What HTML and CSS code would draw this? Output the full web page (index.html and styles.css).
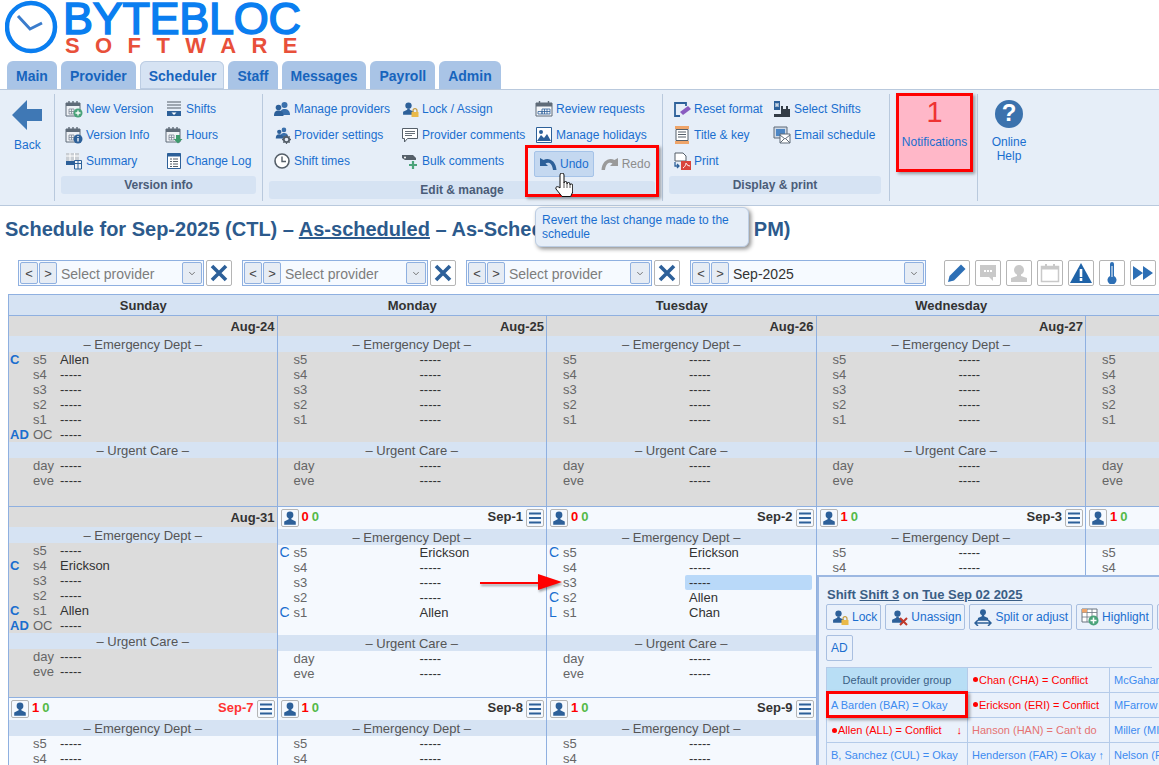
FILE: index.html
```html
<!DOCTYPE html>
<html lang="en">
<head>
    <meta charset="UTF-8">
    <meta name="viewport" content="width=device-width, initial-scale=1.0">
    <title>Schedule for Sep-2025</title>
    <link rel="stylesheet" href="styles.css">
</head>
<body>

    <svg class="defs" width="0" height="0">
        <symbol id="cal" viewBox="0 0 18 18">
            <path d="M1 3h14v13H1z" fill="#eef1f5" stroke="#5f6b78"/><path d="M1 3h14v3H1z" fill="#5f6b78"/>
            <path d="M4 1v3M8 1v3M12 1v3" stroke="#5f6b78" stroke-width="1.4"/>
            <path d="M4 9h5v5H4zM6.500 9v5M4 11.500h5" fill="none" stroke="#7d8894" stroke-width=".8"/>
        </symbol>
        <symbol id="person" viewBox="0 0 18 18">
            <circle cx="9" cy="5.500" r="3.800" fill="#2d6099"/>
            <path d="M7.500 9h3v1.500l5 2.500v3.500h-13V13l5-2.500z" fill="#2d6099"/>
        </symbol>
        <symbol id="people" viewBox="0 0 18 18">
            <circle cx="11.500" cy="5" r="3" fill="#3a70ac"/><path d="M7 15c0-5 2-6 4.500-6s5.500 1 5.500 6z" fill="#3a70ac"/>
            <circle cx="5.500" cy="7.500" r="2.800" fill="#2d6099"/><path d="M1 16c0-4 1.500-5.500 4.500-5.500s5 1.500 5 5.500z" fill="#2d6099"/>
        </symbol>
        <symbol id="gear" viewBox="0 0 10 10">
            <circle cx="5" cy="5" r="3" fill="none" stroke="#555f69" stroke-width="2"/>
            <path d="M5 0v2M5 8v2M0 5h2M8 5h2M1.500 1.500l1.500 1.500M7 7l1.500 1.500M8.500 1.500L7 3M3 7L1.500 8.500" stroke="#555f69" stroke-width="1.400"/>
        </symbol>
        <symbol id="lock" viewBox="0 0 10 10">
            <path d="M3 5V3.200a2 2 0 0 1 4 0V5" fill="none" stroke="#c59a3a" stroke-width="1.200"/>
            <rect x="1.500" y="4.500" width="7" height="5" fill="#e9b949"/>
        </symbol>
    </svg>

    <header class="brand">
        <svg class="clock" width="54" height="54" viewBox="0 0 54 54">
            <circle cx="26" cy="27" r="24" fill="none" stroke="#0a7ef0" stroke-width="4.500"/>
            <path d="M13 16l12 13 12-6" fill="none" stroke="#3a7ccc" stroke-width="3"/>
        </svg>
        <div class="brand-text">
            <div class="brand-top">BYTEBLOC</div>
            <div class="brand-sub">SOFTWARE</div>
        </div>
    </header>

    <nav class="tabs">
        <a class="tab">Main</a>
        <a class="tab">Provider</a>
        <a class="tab active">Scheduler</a>
        <a class="tab">Staff</a>
        <a class="tab">Messages</a>
        <a class="tab">Payroll</a>
        <a class="tab">Admin</a>
    </nav>

    <section class="ribbon">
        <div class="group back-group">
            <svg width="30" height="30" viewBox="0 0 30 30"><path d="M0 15L15 0v9h15v12H15v9z" fill="#3f78b5"/></svg>
            <div class="back-label">Back</div>
        </div>

        <div class="group version-group">
            <div class="items">
                <a class="item"><svg class="ico" viewBox="0 0 18 18"><use href="#cal"/><circle cx="13" cy="13" r="4.500" fill="#4aa37a"/><path d="M13 10.500v5M10.500 13h5" stroke="#fff" stroke-width="1.300"/></svg>New Version</a>
                <a class="item"><svg class="ico" viewBox="0 0 18 18"><path d="M2 2h14M2 5h14M2 8h14" stroke="#555f69"/><path d="M2 11h14v5H2z" fill="#2d6099"/><path d="M6.500 12.500h5L9 15z" fill="#fff"/></svg>Shifts</a>
                <a class="item"><svg class="ico" viewBox="0 0 18 18"><use href="#cal"/><circle cx="13" cy="13" r="4.500" fill="#2d6099"/><path d="M13 12v3.500M13 10v1" stroke="#fff" stroke-width="1.300"/></svg>Version Info</a>
                <a class="item"><svg class="ico" viewBox="0 0 18 18"><use href="#cal"/><path d="M11 9h4v4h2.500L13 17.500 8.500 13H11z" fill="#3e9a6c"/></svg>Hours</a>
                <a class="item"><svg class="ico" viewBox="0 0 18 18"><path d="M1 1h13v10H1z" fill="#c9ced4"/><path d="M1 4h13M5 1v10M9.500 1v10" stroke="#fff"/><path d="M1 9h8v4H1z" fill="#2d6099"/><path d="M9.500 8.500h7v8.500h-7z" fill="#f2f5f8" stroke="#2d6099"/><path d="M10 11.500h6M13 9v8" stroke="#2d6099"/></svg>Summary</a>
                <a class="item"><svg class="ico" viewBox="0 0 18 18"><path d="M2.500 1.500h13v15h-13z" fill="#fff" stroke="#2d6099"/><path d="M2.500 1.500h13v3h-13z" fill="#2d6099"/><path d="M5 7h2M8 7h5M5 9.500h2M8 9.500h5M5 12h2M8 12h5M5 14.500h2M8 14.500h5" stroke="#555f69"/></svg>Change Log</a>
            </div>
            <div class="group-label">Version info</div>
        </div>

        <div class="group edit-group">
            <div class="items">
                <a class="item"><svg class="ico" viewBox="0 0 18 18"><use href="#people"/></svg>Manage providers</a>
                <a class="item"><svg class="ico" viewBox="0 0 18 18"><use href="#person" width="15" height="17"/><use href="#lock" x="9" y="7" width="10" height="11"/></svg>Lock / Assign</a>
                <a class="item"><svg class="ico" viewBox="0 0 18 18"><path d="M1 3h16v13H1z" fill="#f4f6f9" stroke="#5f6b78"/><path d="M1 3h16v3.500H1z" fill="#5f6b78"/><path d="M4.500 1v3M13.500 1v3" stroke="#5f6b78" stroke-width="1.400"/><path d="M7 9h8v5H7zM9.500 9v5M12 9v5M7 11.500h8M3 11.500h4v2.500H3z" fill="none" stroke="#2d6099" stroke-width=".8"/></svg>Review requests</a>
                <a class="item"><svg class="ico" viewBox="0 0 18 18"><use href="#people" width="14" height="14" x="2"/><use href="#gear" x="9" y="9" width="9" height="9"/></svg>Provider settings</a>
                <a class="item"><svg class="ico" viewBox="0 0 18 18"><path d="M1.500 2.500h15v10h-10l-3 3.500v-3.500h-2z" fill="#fff" stroke="#555f69"/><path d="M4 5.500h10M4 7.500h10M4 9.500h7" stroke="#555f69" stroke-width=".9"/></svg>Provider comments</a>
                <a class="item"><svg class="ico" viewBox="0 0 18 18"><path d="M1.500 1.500h15v15h-15z" fill="#fff" stroke="#2d6099"/><path d="M2 15l4-6 3 3 3-4 4 7z" fill="#2d6099"/><circle cx="6" cy="6" r="2" fill="#2d6099"/></svg>Manage holidays</a>
                <a class="item"><svg class="ico" viewBox="0 0 18 18"><circle cx="9" cy="9" r="7" fill="#fff" stroke="#555f69" stroke-width="1.600"/><path d="M9 4.500V9.500h4" fill="none" stroke="#555f69" stroke-width="1.400"/></svg>Shift times</a>
                <a class="item"><svg class="ico" viewBox="0 0 18 18"><path d="M1 3h11l3 3v2H4L1 6z" fill="#555f69"/><circle cx="4" cy="5.500" r="1" fill="#fff"/><path d="M12 9v8M8 13h8" stroke="#4aa37a" stroke-width="2.200"/></svg>Bulk comments</a>
                <div class="history">
                    <a class="hist-btn on"><svg width="18" height="14" viewBox="0 0 18 14"><path d="M1 1v8h8L6.500 6.500C9 5 13 5.500 14 13h3.500C17 4 10 0 4.500 3z" fill="#2d6099"/></svg>Undo</a>
                    <a class="hist-btn off"><svg width="18" height="14" viewBox="0 0 18 14"><path d="M17 1v8H9l2.500-2.500C9 5 5 5.500 4 13H.5C1 4 8 0 13.500 3z" fill="#9a9a9a"/></svg>Redo</a>
                </div>
            </div>
            <div class="group-label">Edit &amp; manage</div>
        </div>

        <div class="group display-group">
            <div class="items">
                <a class="item"><svg class="ico" viewBox="0 0 18 18"><path d="M2 7V3h11v3M2 7v9h5" fill="none" stroke="#2d6099" stroke-width="1.800"/><path d="M7 12l8-6 3 3-8 6z" fill="#8a5cc0"/></svg>Reset format</a>
                <a class="item"><svg class="ico" viewBox="0 0 18 18"><path d="M1 1h6v9H1z" fill="#2d6099"/><path d="M3 3v4M5 3v4M3 5h2" stroke="#fff"/><path d="M8 6h2v3h3V6h2v3h2v8H1v-3h7z" fill="#333c46"/></svg>Select Shifts</a>
                <a class="item"><svg class="ico" viewBox="0 0 18 18"><path d="M2 0h14v3H2zM2 15h14v3H2z" fill="#efa56a"/><path d="M3 3.500h12v11H3z" fill="#fff" stroke="#555f69"/><path d="M5 6h8M5 8.500h8M5 11h8" stroke="#555f69"/></svg>Title &amp; key</a>
                <a class="item"><svg class="ico" viewBox="0 0 18 18"><path d="M1 1h13v11H1z" fill="#cfd9e6" stroke="#5f6b78"/><path d="M3 3h9v7H3z" fill="#4d86c4"/><path d="M7 8h10v9H7z" fill="#fff" stroke="#5f6b78"/><path d="M7 9l5 4 5-4M7 17l4-4M17 17l-4-4" fill="none" stroke="#5f6b78"/></svg>Email schedule</a>
                <a class="item"><svg class="ico" viewBox="0 0 18 18"><path d="M2 1h8l3 3v5H2z" fill="#fff" stroke="#555f69"/><path d="M2 10v4h4M4 12l2 2-2 2" fill="none" stroke="#2d6099" stroke-width="1.300"/><path d="M8 9h10v9H8z" fill="#d9443a"/><path d="M10 16c3-2 3-5 3-5s1 3 4 3" fill="none" stroke="#fff"/></svg>Print</a>
            </div>
            <div class="group-label">Display &amp; print</div>
        </div>

        <div class="group notif-group">
            <a class="notif"><span class="notif-count">1</span><span>Notifications</span></a>
        </div>

        <div class="help-group">
            <svg width="28" height="28" viewBox="0 0 28 28"><circle cx="14" cy="14" r="14" fill="#3b72ad"/><text class="help-mark" x="14" y="21" text-anchor="middle">?</text></svg>
            <div class="help-label">Online<br>Help</div>
        </div>
    </section>

    <h1 class="page-title">Schedule for Sep-2025 (CTL) – <u>As-scheduled</u> – As-Scheduled (09/02/2025, 3:15 PM)</h1>

    <div class="filters">
        <div class="picker"><button class="step">&lt;</button><button class="step">&gt;</button><span class="picker-text">Select provider</span><svg class="drop" viewBox="0 0 20 22"><path d="M7 10l3 3 3-3" fill="none" stroke="#666"/></svg></div>
        <button class="clear"><svg width="18" height="18" viewBox="0 0 18 18"><path d="M2 2l14 14M16 2L2 16" stroke="#2d6099" stroke-width="3.600"/></svg></button>
        <div class="picker"><button class="step">&lt;</button><button class="step">&gt;</button><span class="picker-text">Select provider</span><svg class="drop" viewBox="0 0 20 22"><path d="M7 10l3 3 3-3" fill="none" stroke="#666"/></svg></div>
        <button class="clear"><svg width="18" height="18" viewBox="0 0 18 18"><path d="M2 2l14 14M16 2L2 16" stroke="#2d6099" stroke-width="3.600"/></svg></button>
        <div class="picker"><button class="step">&lt;</button><button class="step">&gt;</button><span class="picker-text">Select provider</span><svg class="drop" viewBox="0 0 20 22"><path d="M7 10l3 3 3-3" fill="none" stroke="#666"/></svg></div>
        <button class="clear"><svg width="18" height="18" viewBox="0 0 18 18"><path d="M2 2l14 14M16 2L2 16" stroke="#2d6099" stroke-width="3.600"/></svg></button>
        <div class="picker month"><button class="step">&lt;</button><button class="step">&gt;</button><span class="picker-text dark">Sep-2025</span><svg class="drop" viewBox="0 0 20 22"><path d="M7 10l3 3 3-3" fill="none" stroke="#666"/></svg></div>

        <div class="tools">
            <button class="clear"><svg width="20" height="20" viewBox="0 0 20 20"><path d="M1 19l1.500-6L14 1.500l4.500 4.500L7 17.500z" fill="#2d6fb5"/></svg></button>
            <button class="clear"><svg width="20" height="20" viewBox="0 0 20 20"><path d="M2 2h16v12h-3v4l-4-4H2z" fill="#c9c9c9"/><path d="M6 8h2M9 8h2M12 8h2" stroke="#fff" stroke-width="2"/></svg></button>
            <button class="clear"><svg width="20" height="20" viewBox="0 0 20 20"><circle cx="10" cy="7" r="5" fill="#c9c9c9"/><path d="M8 11h4v2l6 2v4H2v-4l6-2z" fill="#c9c9c9"/></svg></button>
            <button class="clear"><svg width="20" height="20" viewBox="0 0 20 20"><path d="M1.500 3.500h17v15h-17z" fill="#fff" stroke="#c9c9c9" stroke-width="1.500"/><path d="M1.500 3.500h17v3h-17zM5 1h2v4H5zM13 1h2v4h-2z" fill="#c9c9c9"/></svg></button>
            <button class="clear"><svg width="22" height="20" viewBox="0 0 22 20"><path d="M11 0l11 20H0z" fill="#1f63a8"/><path d="M11 6v8M11 15v3" stroke="#fff" stroke-width="2.600"/></svg></button>
            <button class="clear"><svg width="14" height="22" viewBox="0 0 14 22"><path d="M5 2a2 2 0 0 1 4 0v12a4.500 4.500 0 1 1-4 0z" fill="#2d6fb5"/><path d="M7 4v11" stroke="#fff"/></svg></button>
            <button class="clear"><svg width="20" height="16" viewBox="0 0 20 16"><path d="M0 1l10 7L0 15zM10 1l10 7-10 7z" fill="#2d6fb5"/></svg></button>
        </div>
    </div>

    <section class="calendar">
        <div class="dow">Sunday</div>
        <div class="dow">Monday</div>
        <div class="dow">Tuesday</div>
        <div class="dow">Wednesday</div>
        <div class="dow"></div>

        <!-- week of Aug-24 -->
        <div class="day off first">
            <div class="day-head plain"><span class="date">Aug-24</span></div>
            <div class="dept">– Emergency Dept –</div>
            <div class="slot"><b>C</b><i>s5</i><span>Allen</span></div>
            <div class="slot"><b></b><i>s4</i><span>-----</span></div>
            <div class="slot"><b></b><i>s3</i><span>-----</span></div>
            <div class="slot"><b></b><i>s2</i><span>-----</span></div>
            <div class="slot"><b></b><i>s1</i><span>-----</span></div>
            <div class="slot"><b>AD</b><i>OC</i><span>-----</span></div>
            <div class="dept">– Urgent Care –</div>
            <div class="slot"><b></b><i>day</i><span>-----</span></div>
            <div class="slot"><b></b><i>eve</i><span>-----</span></div>
        </div>
        <div class="day off">
            <div class="day-head plain"><span class="date">Aug-25</span></div>
            <div class="dept">– Emergency Dept –</div>
            <div class="slot"><b></b><i>s5</i><span>-----</span></div>
            <div class="slot"><b></b><i>s4</i><span>-----</span></div>
            <div class="slot"><b></b><i>s3</i><span>-----</span></div>
            <div class="slot"><b></b><i>s2</i><span>-----</span></div>
            <div class="slot"><b></b><i>s1</i><span>-----</span></div>
            <div class="slot"></div>
            <div class="dept">– Urgent Care –</div>
            <div class="slot"><b></b><i>day</i><span>-----</span></div>
            <div class="slot"><b></b><i>eve</i><span>-----</span></div>
        </div>
        <div class="day off">
            <div class="day-head plain"><span class="date">Aug-26</span></div>
            <div class="dept">– Emergency Dept –</div>
            <div class="slot"><b></b><i>s5</i><span>-----</span></div>
            <div class="slot"><b></b><i>s4</i><span>-----</span></div>
            <div class="slot"><b></b><i>s3</i><span>-----</span></div>
            <div class="slot"><b></b><i>s2</i><span>-----</span></div>
            <div class="slot"><b></b><i>s1</i><span>-----</span></div>
            <div class="slot"></div>
            <div class="dept">– Urgent Care –</div>
            <div class="slot"><b></b><i>day</i><span>-----</span></div>
            <div class="slot"><b></b><i>eve</i><span>-----</span></div>
        </div>
        <div class="day off">
            <div class="day-head plain"><span class="date">Aug-27</span></div>
            <div class="dept">– Emergency Dept –</div>
            <div class="slot"><b></b><i>s5</i><span>-----</span></div>
            <div class="slot"><b></b><i>s4</i><span>-----</span></div>
            <div class="slot"><b></b><i>s3</i><span>-----</span></div>
            <div class="slot"><b></b><i>s2</i><span>-----</span></div>
            <div class="slot"><b></b><i>s1</i><span>-----</span></div>
            <div class="slot"></div>
            <div class="dept">– Urgent Care –</div>
            <div class="slot"><b></b><i>day</i><span>-----</span></div>
            <div class="slot"><b></b><i>eve</i><span>-----</span></div>
        </div>
        <div class="day off">
            <div class="day-head plain"></div>
            <div class="dept"></div>
            <div class="slot"><b></b><i>s5</i></div>
            <div class="slot"><b></b><i>s4</i></div>
            <div class="slot"><b></b><i>s3</i></div>
            <div class="slot"><b></b><i>s2</i></div>
            <div class="slot"><b></b><i>s1</i></div>
            <div class="slot"></div>
            <div class="dept"></div>
            <div class="slot"><b></b><i>day</i></div>
            <div class="slot"><b></b><i>eve</i></div>
        </div>

        <!-- week of Aug-31 -->
        <div class="day off first">
            <div class="day-head plain"><span class="date">Aug-31</span></div>
            <div class="dept">– Emergency Dept –</div>
            <div class="slot"><b></b><i>s5</i><span>-----</span></div>
            <div class="slot"><b>C</b><i>s4</i><span>Erickson</span></div>
            <div class="slot"><b></b><i>s3</i><span>-----</span></div>
            <div class="slot"><b></b><i>s2</i><span>-----</span></div>
            <div class="slot"><b>C</b><i>s1</i><span>Allen</span></div>
            <div class="slot"><b>AD</b><i>OC</i><span>-----</span></div>
            <div class="dept">– Urgent Care –</div>
            <div class="slot"><b></b><i>day</i><span>-----</span></div>
            <div class="slot"><b></b><i>eve</i><span>-----</span></div>
        </div>
        <div class="day">
            <div class="day-head"><button class="mini"><svg width="16" height="16"><use href="#person"/></svg></button><em class="red">0</em><em class="green">0</em><span class="date">Sep-1</span><button class="mini"><svg width="14" height="14" viewBox="0 0 14 14"><path d="M1 2.500h12M1 7h12M1 11.500h12" stroke="#2d6099" stroke-width="2"/></svg></button></div>
            <div class="dept">– Emergency Dept –</div>
            <div class="slot"><b>C</b><i>s5</i><span>Erickson</span></div>
            <div class="slot"><b></b><i>s4</i><span>-----</span></div>
            <div class="slot"><b></b><i>s3</i><span>-----</span></div>
            <div class="slot"><b></b><i>s2</i><span>-----</span></div>
            <div class="slot"><b>C</b><i>s1</i><span>Allen</span></div>
            <div class="slot"></div>
            <div class="dept">– Urgent Care –</div>
            <div class="slot"><b></b><i>day</i><span>-----</span></div>
            <div class="slot"><b></b><i>eve</i><span>-----</span></div>
        </div>
        <div class="day">
            <div class="day-head"><button class="mini"><svg width="16" height="16"><use href="#person"/></svg></button><em class="red">0</em><em class="green">0</em><span class="date">Sep-2</span><button class="mini"><svg width="14" height="14" viewBox="0 0 14 14"><path d="M1 2.500h12M1 7h12M1 11.500h12" stroke="#2d6099" stroke-width="2"/></svg></button></div>
            <div class="dept">– Emergency Dept –</div>
            <div class="slot"><b>C</b><i>s5</i><span>Erickson</span></div>
            <div class="slot"><b></b><i>s4</i><span>-----</span></div>
            <div class="slot picked"><b></b><i>s3</i><span>-----</span></div>
            <div class="slot"><b>C</b><i>s2</i><span>Allen</span></div>
            <div class="slot"><b>L</b><i>s1</i><span>Chan</span></div>
            <div class="slot"></div>
            <div class="dept">– Urgent Care –</div>
            <div class="slot"><b></b><i>day</i><span>-----</span></div>
            <div class="slot"><b></b><i>eve</i><span>-----</span></div>
        </div>
        <div class="day">
            <div class="day-head"><button class="mini"><svg width="16" height="16"><use href="#person"/></svg></button><em class="red">1</em><em class="green">0</em><span class="date">Sep-3</span><button class="mini"><svg width="14" height="14" viewBox="0 0 14 14"><path d="M1 2.500h12M1 7h12M1 11.500h12" stroke="#2d6099" stroke-width="2"/></svg></button></div>
            <div class="dept">– Emergency Dept –</div>
            <div class="slot"><b></b><i>s5</i><span>-----</span></div>
            <div class="slot"><b></b><i>s4</i><span>-----</span></div>
        </div>
        <div class="day">
            <div class="day-head"><button class="mini"><svg width="16" height="16"><use href="#person"/></svg></button><em class="red">1</em><em class="green">0</em></div>
            <div class="dept"></div>
            <div class="slot"><b></b><i>s5</i></div>
            <div class="slot"><b></b><i>s4</i></div>
        </div>

        <!-- week of Sep-7 -->
        <div class="day first">
            <div class="day-head"><button class="mini"><svg width="16" height="16"><use href="#person"/></svg></button><em class="red">1</em><em class="green">0</em><span class="date sunday">Sep-7</span><button class="mini"><svg width="14" height="14" viewBox="0 0 14 14"><path d="M1 2.500h12M1 7h12M1 11.500h12" stroke="#2d6099" stroke-width="2"/></svg></button></div>
            <div class="dept">– Emergency Dept –</div>
            <div class="slot"><b></b><i>s5</i><span>-----</span></div>
            <div class="slot"><b></b><i>s4</i><span>-----</span></div>
        </div>
        <div class="day">
            <div class="day-head"><button class="mini"><svg width="16" height="16"><use href="#person"/></svg></button><em class="red">1</em><em class="green">0</em><span class="date">Sep-8</span><button class="mini"><svg width="14" height="14" viewBox="0 0 14 14"><path d="M1 2.500h12M1 7h12M1 11.500h12" stroke="#2d6099" stroke-width="2"/></svg></button></div>
            <div class="dept">– Emergency Dept –</div>
            <div class="slot"><b></b><i>s5</i><span>-----</span></div>
            <div class="slot"><b></b><i>s4</i><span>-----</span></div>
        </div>
        <div class="day">
            <div class="day-head"><button class="mini"><svg width="16" height="16"><use href="#person"/></svg></button><em class="red">1</em><em class="green">0</em><span class="date">Sep-9</span><button class="mini"><svg width="14" height="14" viewBox="0 0 14 14"><path d="M1 2.500h12M1 7h12M1 11.500h12" stroke="#2d6099" stroke-width="2"/></svg></button></div>
            <div class="dept">– Emergency Dept –</div>
            <div class="slot"><b></b><i>s5</i><span>-----</span></div>
            <div class="slot"><b></b><i>s4</i><span>-----</span></div>
        </div>
    </section>

    <!-- things lying over the page -->
    <div class="tooltip">Revert the last change made to the schedule</div>
    <div class="callout callout-undo"></div>

    <svg class="hand" width="18" height="24" viewBox="0 0 18 24"><path d="M5 2a2 2 0 0 1 4 0v8a1.500 1.500 0 0 1 3 0v1a1.500 1.500 0 0 1 3 0v1a1.400 1.400 0 0 1 2.700 0v7l-2 4.500H7L1 16c-1-2 1.500-3.500 4-1z" fill="#fff" stroke="#111"/><path d="M9 10v5M12 11v4M15 12v3" stroke="#111" stroke-width=".7"/></svg>

    <svg class="arrow" width="84" height="20" viewBox="0 0 84 20"><path d="M0 9h58v-8l24 8-24 8V11H0z" fill="#f00"/></svg>

    <aside class="shift-panel">
        <div class="panel-title">Shift <u>Shift 3</u> on <u>Tue Sep 02 2025</u></div>
        <div class="panel-actions">
            <button class="act"><svg class="ico" viewBox="0 0 18 18"><use href="#person" width="15" height="17"/><use href="#lock" x="9" y="7" width="10" height="11"/></svg>Lock</button>
            <button class="act"><svg class="ico" viewBox="0 0 18 18"><use href="#person" width="15" height="17"/><path d="M10 10l7 7M17 10l-7 7" stroke="#c0392b" stroke-width="2"/></svg>Unassign</button>
            <button class="act"><svg class="ico" viewBox="0 0 18 18"><use href="#person" width="14" height="14" x="2"/><path d="M1 15h16M4 12l-3 3 3 3M14 12l3 3-3 3" fill="none" stroke="#2d6099" stroke-width="1.500"/></svg>Split or adjust</button>
            <button class="act"><svg class="ico" viewBox="0 0 18 18"><path d="M1 1h15v13H1z" fill="#fff" stroke="#6b7580"/><path d="M1 4.500h15M1 9h15M6 1v13M11 1v13" stroke="#6b7580" stroke-width=".8"/><path d="M1 1h5v3.500H1z" fill="#efa56a"/><circle cx="12.500" cy="12.500" r="5" fill="#4aa37a"/><path d="M12.500 9.500v6M9.500 12.500h6" stroke="#fff" stroke-width="1.500"/></svg>Highlight</button>
            <button class="act spare"></button>
        </div>
        <button class="act ad">AD</button>
        <div class="panel-table">
            <div class="cell head">Default provider group</div>
            <div class="cell conflict"><span class="dot"></span>Chan (CHA) = Conflict</div>
            <div class="cell">McGahan</div>
            <div class="cell">A Barden (BAR) = Okay</div>
            <div class="cell conflict"><span class="dot"></span>Erickson (ERI) = Conflict</div>
            <div class="cell">MFarrow</div>
            <div class="cell conflict split"><span><span class="dot"></span>Allen (ALL) = Conflict</span><span class="mark">↓</span></div>
            <div class="cell cant">Hanson (HAN) = Can't do</div>
            <div class="cell">Miller (MI</div>
            <div class="cell">B, Sanchez (CUL) = Okay</div>
            <div class="cell split"><span>Henderson (FAR) = Okay</span><span class="mark">↑</span></div>
            <div class="cell">Nelson (F</div>
        </div>
        <div class="callout callout-barden"></div>
    </aside>

</body>
</html>
```

FILE: styles.css
```css
html, body{
    margin: 0;
    height: 765px;
    overflow: hidden;
    background-color: white;
}

body{
    position: relative;
    font-family: "Liberation Sans", Arial, sans-serif;
    font-size: 12px;
    color: #333;
}

.defs{
    position: absolute;
}

.ico{
    width: 18px;
    height: 18px;
    flex: none;
}

/* logo */
.brand{
    display: flex;
    height: 61px;
    padding-left: 5px;
    box-sizing: border-box;
}

.clock{
    margin-right: 4px;
}

.brand-top{
    font-size: 45px;
    line-height: 36px;
    letter-spacing: -0.3px;
    color: #0a7ef0;
    -webkit-text-stroke: 1.6px #0a7ef0;
    margin-top: 1px;
}

.brand-sub{
    font-size: 22px;
    line-height: 18px;
    font-weight: bold;
    letter-spacing: 15.4px;
    color: #e8503a;
    margin-left: 2px;
}

/* tabs */
.tabs{
    display: flex;
    gap: 4px;
    height: 28px;
    padding-left: 7px;
}

.tab{
    display: flex;
    align-items: center;
    padding: 2px 9px 0;
    background-color: #a9c4e6;
    border-radius: 6px 6px 0 0;
    font-size: 14px;
    font-weight: bold;
    color: #1764bd;
}

.tab.active{
    background-color: #d6e3f3;
    box-shadow: inset 0 0 0 1px #bccde3;
    padding: 2px 8px 0 9px;
}

/* ribbon */
.ribbon{
    display: flex;
    height: 115px;
    background-color: #e6eef8;
    border-top: 1px solid #b9c9dd;
    border-bottom: 1px solid #b9c9dd;
}

.group{
    box-sizing: border-box;
    height: 107px;
    margin-top: 4px;
    border-right: 1px solid #b9c9dd;
}

.back-group{
    width: 55px;
    padding: 6px 0 0 12px;
}

.back-label{
    margin: 5px 0 0 2px;
    color: #1a6ecf;
}

.item{
    display: flex;
    align-items: center;
    gap: 3px;
    height: 26px;
    color: #1a6ecf;
    white-space: nowrap;
}

.items{
    display: grid;
    grid-auto-rows: 26px;
    padding-top: 2px;
}

.group-label{
    height: 18px;
    line-height: 18px;
    text-align: center;
    font-weight: bold;
    background-color: #d6e3f3;
    border-radius: 3px;
    color: #4a5c78;
}

.version-group{
    width: 208px;
    padding: 0 6px;
}

.version-group .items{
    grid-template-columns: 100px 100px;
    padding-left: 4px;
}

.version-group .group-label{
    margin-top: 2px;
}

.edit-group{
    width: 400px;
    padding: 0 7px 0 6px;
}

.edit-group .items{
    grid-template-columns: 128px 134px 1fr;
    padding-left: 4px;
}

.edit-group .group-label{
    margin-top: 7px;
}

.display-group{
    width: 227px;
    padding: 0 8px 0 6px;
}

.display-group .items{
    grid-template-columns: 100px 1fr;
    padding-left: 4px;
}

.display-group .group-label{
    margin-top: 2px;
}

.history{
    display: flex;
    gap: 0;
    margin: 3px 0 -3px -1px;
}

.hist-btn{
    display: flex;
    align-items: center;
    gap: 3px;
    height: 24px;
    padding: 0 4px;
    border: 1px solid transparent;
    border-radius: 2px;
}

.hist-btn.on{
    background-color: #c4d8f0;
    border-color: #a5c3e8;
    color: #1a6ecf;
    margin-right: 2px;
}

.hist-btn.off{
    color: #8c8c8c;
}

.notif-group{
    width: 88px;
    padding-left: 6px;
}

.notif{
    box-sizing: border-box;
    display: flex;
    flex-direction: column;
    align-items: center;
    width: 77px;
    height: 79px;
    margin-top: -1px;
    background-color: #ffb7c8;
    border: 3px solid #f00;
    box-shadow: 2px 2px 3px rgba(0, 0, 0, 0.35);
    color: #1a6ecf;
}

.notif-count{
    font-size: 29px;
    line-height: 32px;
    margin: 0 0 7px;
    color: #e33;
}

.help-group{
    width: 62px;
    padding-top: 10px;
    text-align: center;
    color: #1a6ecf;
}

.help-mark{
    font-size: 24px;
    font-weight: bold;
    fill: white;
}

.help-label{
    margin-top: 4px;
    line-height: 14px;
}

/* title */
.page-title{
    margin: 11px 0 0 5px;
    height: 24px;
    line-height: 24px;
    font-size: 20px;
    font-weight: bold;
    color: #2c5a8c;
    white-space: nowrap;
}

/* filters */
.filters{
    display: flex;
    align-items: center;
    gap: 2px;
    height: 26px;
    margin: 19px 0 0 18px;
    width: 1141px;
}

.picker{
    box-sizing: border-box;
    display: flex;
    align-items: center;
    gap: 1px;
    width: 186px;
    height: 26px;
    padding: 0 1px;
    background-color: #f6faff;
    border: 1px solid #8fb0e0;
}

.picker.month{
    width: 236px;
    margin-left: 8px;
}

.clear + .picker{
    margin-left: 8px;
}

.step{
    width: 18px;
    height: 22px;
    padding: 0;
    background-color: #e6ecf4;
    border: 1px solid #8fb0e0;
    border-radius: 2px;
    font-family: inherit;
    font-size: 13px;
    color: #444;
}

.picker-text{
    flex: 1;
    padding: 1px 0 0 3px;
    font-size: 14px;
    color: #7d7d7d;
}

.picker-text.dark{
    color: #333;
}

.drop{
    width: 20px;
    height: 22px;
    background-color: #e6ecf4;
    border: 1px solid #8fb0e0;
    border-radius: 2px;
    box-sizing: border-box;
}

.clear{
    display: flex;
    align-items: center;
    justify-content: center;
    width: 26px;
    height: 26px;
    padding: 0;
    background-color: white;
    border: 1px solid #b5b5b5;
    border-radius: 2px;
}

.tools{
    display: flex;
    gap: 5px;
    margin-left: 16px;
}

/* calendar */
.calendar{
    display: grid;
    grid-template-columns: 268.5px repeat(4, 269.5px);
    grid-template-rows: 21px 191px 191px 100px;
    width: 1151px;
    overflow: hidden;
    margin: 8px 0 0 8px;
    border-top: 1px solid #8fb0e0;
    border-left: 1px solid #8fb0e0;
}

.dow{
    line-height: 21px;
    text-align: center;
    font-size: 13px;
    font-weight: bold;
    background-color: #d6e3f3;
    border-bottom: 1px solid #8fb0e0;
}

.day{
    box-sizing: border-box;
    background-color: #f5f9fe;
    border-right: 1px solid #8fb0e0;
    border-bottom: 1px solid #8fb0e0;
    font-size: 13px;
}

.day.off{
    background-color: #dcdcdc;
}

.day-head{
    display: flex;
    align-items: center;
    height: 22px;
    padding: 0 2px 0 3px;
}

.first .day-head{
    padding-left: 2px;
}

.day-head.plain{
    height: 20px;
    padding-right: 0;
}

.date{
    margin-left: auto;
    padding: 0 3px 3px 0;
    font-weight: bold;
}

.plain .date{
    padding: 0 2px 0 0;
}

.date.sunday{
    color: #f33;
}

.mini{
    display: flex;
    align-items: center;
    justify-content: center;
    width: 18px;
    height: 18px;
    padding: 0;
    background-color: #f5f9fe;
    border: 1px solid #b5b5b5;
    border-radius: 2px;
}

.day-head em{
    font-style: normal;
    font-weight: bold;
    margin: 0 0 3px 3px;
}

.red{
    color: #f00;
}

.green{
    color: #54b948;
}

.dept{
    height: 16px;
    line-height: 17px;
    text-align: center;
    background-color: #d6e3f3;
    color: #555;
}

.slot{
    display: grid;
    grid-template-columns: 14px 126px 1fr;
    height: 15px;
    line-height: 15px;
    padding-left: 2px;
}

.first .slot{
    grid-template-columns: 23px 27px 1fr;
    padding-left: 1px;
}

.slot b{
    color: #1a6ecf;
    font-size: 14px;
    font-weight: normal;
}

.first .slot b{
    font-size: 13px;
    font-weight: bold;
}

.slot i{
    font-style: normal;
    color: #666;
}

.picked span{
    margin: 0 4px 0 -4px;
    padding-left: 4px;
    background-color: #b9d9f9;
    border-radius: 2px;
}

/* overlays */
.tooltip{
    position: absolute;
    left: 535px;
    top: 207px;
    width: 214px;
    height: 40px;
    box-sizing: border-box;
    padding: 5px 6px;
    line-height: 14px;
    background-color: #e6eef8;
    border: 1px solid #bccde3;
    border-radius: 6px;
    box-shadow: 2px 2px 4px rgba(0, 0, 0, 0.45);
    color: #1a6ecf;
}

.callout{
    position: absolute;
    box-sizing: border-box;
    border: 3px solid #f00;
    box-shadow: 2px 2px 3px rgba(0, 0, 0, 0.35);
}

.callout-undo{
    left: 525px;
    top: 145px;
    width: 134px;
    height: 52px;
}

.callout-barden{
    left: 7px;
    top: 114px;
    width: 142px;
    height: 27px;
}

.hand{
    position: absolute;
    left: 555px;
    top: 173px;
}

.arrow{
    position: absolute;
    left: 480px;
    top: 573px;
    filter: drop-shadow(1px 2px 1px rgba(0, 0, 0, 0.35));
}

.shift-panel{
    position: absolute;
    left: 817px;
    top: 575px;
    width: 342px;
    height: 190px;
    overflow: hidden;
    box-sizing: border-box;
    padding: 10px 7px;
    background-color: #eaf1fb;
    border-top: 2px solid #9cb8e2;
    border-left: 2px solid #9cb8e2;
}

.panel-title{
    margin-left: 1px;
    font-size: 13px;
    font-weight: bold;
    line-height: 15px;
    color: #3b5e85;
}

.panel-actions{
    display: flex;
    gap: 4px;
    margin-top: 2px;
}

.act{
    display: flex;
    flex: none;
    align-items: center;
    gap: 3px;
    height: 26px;
    padding: 0 3px 0 4px;
    background-color: #eaf1fb;
    border: 1px solid #a9bfe0;
    border-radius: 2px;
    font-family: inherit;
    font-size: 12px;
    color: #1a6ecf;
    white-space: nowrap;
}

.act.ad{
    margin-top: 5px;
    padding: 0 4px;
}

.act.spare{
    width: 20px;
}

.panel-table{
    display: grid;
    grid-template-columns: 141px 142px 60px;
    grid-auto-rows: 25px;
    margin-top: 6px;
    border-top: 1px solid #b5cbe9;
    border-left: 1px solid #b5cbe9;
}

.cell{
    box-sizing: border-box;
    display: flex;
    align-items: center;
    padding-left: 4px;
    border-right: 1px solid #b5cbe9;
    border-bottom: 1px solid #b5cbe9;
    color: #3d8bf0;
    white-space: nowrap;
    overflow: hidden;
    font-size: 11px;
}

.cell.head{
    justify-content: center;
    padding-left: 0;
    background-color: #b8def5;
    color: #3b5e85;
}

.cell.conflict{
    color: #f00;
}

.cell.cant{
    color: #e57373;
}

.cell.split{
    justify-content: space-between;
    padding-right: 5px;
}

.mark{
    font-weight: bold;
}

.dot{
    display: inline-block;
    width: 5px;
    height: 5px;
    margin: 0 1px 1px 1px;
    border-radius: 50%;
    background-color: #f00;
}
```
